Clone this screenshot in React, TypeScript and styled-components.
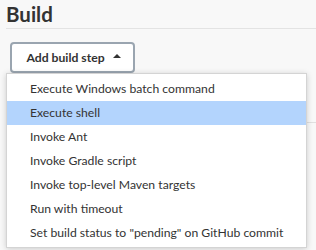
import React from 'react'
import styled, { createGlobalStyle } from 'styled-components';

const GlobalStyle = createGlobalStyle`
  html, body {
    margin: 0;
    padding: 0;
    background: #f8f8f8;
    font-family: Lato, "Noto Sans", sans-serif;
    color: #333;
  }
`;

const Page = styled.div`
  width: 316px;
  height: 250px;
  overflow: hidden;
  padding: 0 0 0 6px;
  box-sizing: border-box;
`;

const Heading = styled.h2`
  margin: 0;
  padding-top: 1px;
  height: 27px;
  font-size: 20.5px;
  font-weight: 700;
  line-height: 27px;
  color: #333;
  border-bottom: 1px solid #e3e3e3;
`;

const Section = styled.div`
  position: relative;
  padding-top: 13px;
`;

const Button = styled.button`
  display: flex;
  align-items: center;
  justify-content: center;
  gap: 8px;
  margin-left: 4px;
  width: 125px;
  height: 31px;
  background: #fff;
  border: 2px solid #9aa5b0;
  border-radius: 4px;
  font-family: Lato, sans-serif;
  font-size: 12.2px;
  font-weight: 700;
  color: #333;
  padding: 0 0 1px 2px;
`;

const Caret = styled.span`
  width: 0;
  height: 0;
  border-left: 4px solid transparent;
  border-right: 4px solid transparent;
  border-bottom: 4px solid #333;
  margin-bottom: 2px;
`;

const Divider = styled.div`
  margin-top: 49px;
  border-top: 1px solid #e0e0e0;
`;

const Menu = styled.ul`
  position: absolute;
  top: 44px;
  left: 0;
  width: 301px;
  margin: 0;
  padding: 3px 0 2px;
  list-style: none;
  background: #fff;
  border: 1px solid #d4d4d4;
  box-shadow: 0 1px 6px rgba(0, 0, 0, 0.18);
  box-sizing: border-box;
`;

const Item = styled.li<{ $active?: boolean }>`
  height: 24px;
  line-height: 24px;
  padding-left: 23px;
  font-size: 12.2px;
  color: #333;
  background: ${props => props.$active ? '#b3d4fd' : 'transparent'};
  white-space: nowrap;
`;

const steps = [
  'Execute Windows batch command',
  'Execute shell',
  'Invoke Ant',
  'Invoke Gradle script',
  'Invoke top-level Maven targets',
  'Run with timeout',
  'Set build status to "pending" on GitHub commit',
];

const App: React.FC = () => {
  return (
    <>
      <GlobalStyle />
      <Page>
        <Heading>Build</Heading>
        <Section>
          <Button>
            Add build step
            <Caret />
          </Button>
          <Divider />
          <Menu>
            {steps.map((step) => (
              <Item key={step} $active={step === 'Execute shell'}>{step}</Item>
            ))}
          </Menu>
        </Section>
      </Page>
    </>
  )
}

export default App
